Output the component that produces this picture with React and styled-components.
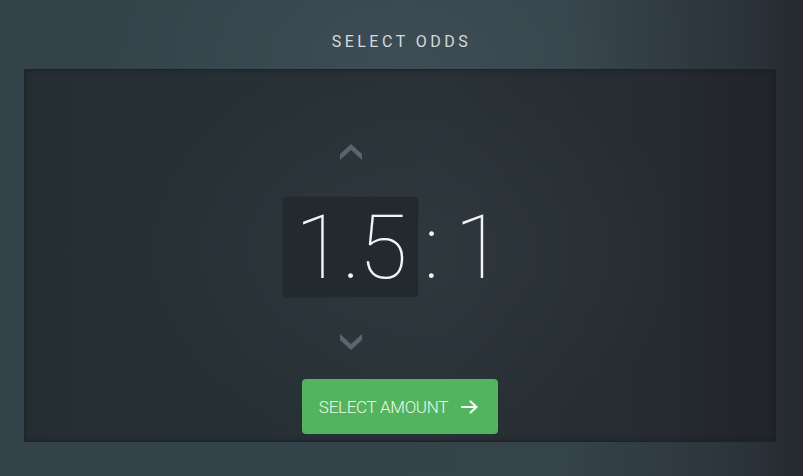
import React from "react";
import styled, { createGlobalStyle } from "styled-components";

const Global = createGlobalStyle`
  html, body { margin: 0; padding: 0; background: #2f3b42; }
  body { font-family: Roboto, "Liberation Sans", sans-serif; }
`;

const Screen = styled.div`
  width: 803px;
  height: 476px;
  box-sizing: border-box;
  display: flex;
  flex-direction: column;
  padding: 0 27px 34px 24px;
  background:
    radial-gradient(ellipse 420px 260px at 400px 60px, rgba(80, 96, 104, 0.35), rgba(80, 96, 104, 0) 70%),
    linear-gradient(90deg, #34424a 0%, #35434b 70%, #2c343b 92%, #25292f 100%);
`;

const Header = styled.div`
  height: 69px;
  display: flex;
  align-items: center;
  justify-content: center;
  padding-top: 14px;
  box-sizing: border-box;
`;

const Title = styled.h1`
  margin: 0;
  font-size: 16px;
  font-weight: 400;
  letter-spacing: 3.5px;
  color: #d5dadc;
  padding-left: 3px;
`;

const Panel = styled.div`
  flex: 1;
  border: 1px solid #1d2327;
  box-shadow: inset 0 0 6px rgba(0, 0, 0, 0.25);
  background:
    radial-gradient(ellipse 380px 260px at 380px 180px, rgba(52, 62, 68, 0.55), rgba(52, 62, 68, 0) 75%),
    linear-gradient(90deg, #252e33 0%, #283136 55%, #252b31 85%, #212429 100%);
  display: flex;
  flex-direction: column;
  align-items: center;
  padding-top: 73px;
  box-sizing: border-box;
`;

const Chevron = styled.button`
  border: 0;
  background: none;
  padding: 0;
  width: 24px;
  height: 18px;
  display: flex;
  align-items: center;
  justify-content: center;
  margin-right: 98px;
  color: #5b666c;
  cursor: pointer;
`;

const Odds = styled.div`
  display: flex;
  align-items: center;
  margin: 36px 14px 36px 0;
`;

const ValueBox = styled.div`
  width: 135px;
  height: 100px;
  border-radius: 4px;
  background: #232a2f;
  box-shadow: 0 0 2px rgba(0, 0, 0, 0.15);
  display: flex;
  align-items: center;
  justify-content: center;
  box-sizing: border-box;
`;

const Digits = styled.span`
  font-family: Roboto, "Liberation Sans", sans-serif;
  font-weight: 100;
  font-size: 89px;
  line-height: 1;
  color: #f2f4f4;
  letter-spacing: ${(p) => p.$spacing || "0px"};
`;

const Separator = styled(Digits)`
  margin: 0 15px 0 6px;
`;

const ActionButton = styled.button`
  margin-top: 28px;
  width: 196px;
  height: 55px;
  border: 0;
  border-radius: 4px;
  background: #52b45c;
  color: #eef7ef;
  font-family: Roboto, "Liberation Sans", sans-serif;
  font-weight: 300;
  font-size: 17px;
  letter-spacing: -0.3px;
  display: flex;
  align-items: center;
  justify-content: center;
  gap: 13px;
  padding-left: 4px;
  cursor: pointer;
`;

const Up = () => (
  <svg width="24" height="18" viewBox="0 0 24 18">
    <path d="M1 17 L12 7 L23 17 L23 11 L12 1 L1 11 Z" fill="currentColor" />
  </svg>
);

const Down = () => (
  <svg width="24" height="18" viewBox="0 0 24 18">
    <path d="M1 1 L12 11 L23 1 L23 7 L12 17 L1 7 Z" fill="currentColor" />
  </svg>
);

const Arrow = () => (
  <svg width="18" height="14" viewBox="0 0 18 14">
    <path d="M1 7 H15 M9.5 1.5 L15.5 7 L9.5 12.5" stroke="#f4faf4" strokeWidth="2.2" fill="none" strokeLinecap="round" strokeLinejoin="round" />
  </svg>
);

export default function App() {
  return (
    <>
      <Global />
      <Screen>
        <Header>
          <Title>SELECT ODDS</Title>
        </Header>
        <Panel>
          <Chevron aria-label="increase"><Up /></Chevron>
          <Odds>
            <ValueBox>
              <Digits $spacing="-2px">1.5</Digits>
            </ValueBox>
            <Separator>:</Separator>
            <Digits>1</Digits>
          </Odds>
          <Chevron aria-label="decrease"><Down /></Chevron>
          <ActionButton>
            SELECT AMOUNT
            <Arrow />
          </ActionButton>
        </Panel>
      </Screen>
    </>
  );
}
